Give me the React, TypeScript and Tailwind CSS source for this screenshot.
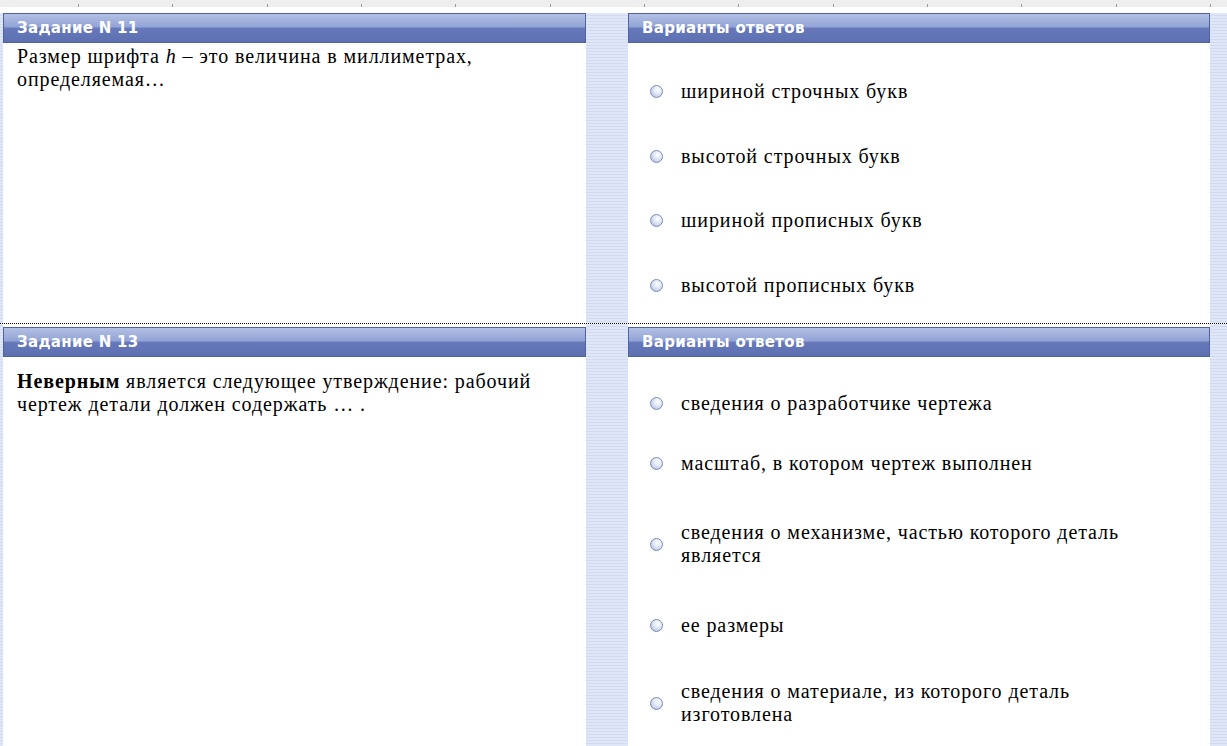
import type { ReactNode } from 'react';

type Task = {
  title: string;
  question: ReactNode;
  questionPad: string;
  answers: Array<{ text: string; h: string }>;
};

const tasks: Task[] = [
  {
    title: 'Задание N 11',
    question: (
      <>
        Размер шрифта <i>h</i> – это величина в миллиметрах, определяемая…
      </>
    ),
    questionPad: 'pt-[2px]',
    answers: [
      { text: 'шириной строчных букв', h: 'h-[65px]' },
      { text: 'высотой строчных букв', h: 'h-[64px]' },
      { text: 'шириной прописных букв', h: 'h-[65px]' },
      { text: 'высотой прописных букв', h: 'h-[65px]' },
    ],
  },
  {
    title: 'Задание N 13',
    question: (
      <>
        <b>Неверным</b> является следующее утверждение: рабочий чертеж детали должен содержать … .
      </>
    ),
    questionPad: 'pt-[13px]',
    answers: [
      { text: 'сведения о разработчике чертежа', h: 'h-[60px]' },
      { text: 'масштаб, в котором чертеж выполнен', h: 'h-[60px]' },
      { text: 'сведения о механизме, частью которого деталь является', h: 'h-[102px]' },
      { text: 'ее размеры', h: 'h-[60px]' },
      { text: 'сведения о материале, из которого деталь изготовлена', h: 'h-[96px]' },
    ],
  },
];

const stripes =
  'bg-[repeating-linear-gradient(to_bottom,#dfe6f7_0px,#dfe6f7_2px,#d2dbf1_2px,#d2dbf1_3px)]';

const serif = "[font-family:'Liberation_Serif','Times_New_Roman',serif] text-[20px] tracking-[0.9px] text-black";

function Header({ children }: { children: ReactNode }) {
  return (
    <div className="h-[30px] shrink-0 flex items-center border border-[#4f63a3] bg-[linear-gradient(to_bottom,#b3c0e4_0%,#93a4d6_45%,#6678ba_52%,#5d70b2_100%)] px-[13px] text-[15px] font-bold text-white [font-family:'DejaVu_Sans',Verdana,sans-serif] tracking-[0.3px]">
      {children}
    </div>
  );
}

function Radio() {
  return (
    <span className="w-[13px] h-[13px] shrink-0 rounded-full border border-[#7a8cb6] bg-[radial-gradient(circle_at_62%_35%,#ffffff_0%,#e6ecf8_35%,#a9b9de_100%)]" />
  );
}

function Ruler() {
  const ticks = Array.from({ length: 13 });
  return (
    <div className="h-[13px] shrink-0">
      <div className="h-[7px] bg-[#eeeeee] flex justify-between items-end pl-[78px] pr-[16px]">
        {ticks.map((_, i) => (
          <span key={i} className="w-px h-[3px] bg-[#9a9a9a]" />
        ))}
      </div>
    </div>
  );
}

function TaskRow({ task, first }: { task: Task; first: boolean }) {
  const panelTop = first ? '' : 'pt-[3px]';
  return (
    <div
      className={`flex ${first ? 'h-[311px] shrink-0 border-b border-dotted border-black' : 'flex-1 min-h-0'}`}
    >
      <div className={`w-[3px] ${stripes}`} />
      <div className={`w-[583px] flex flex-col ${panelTop}`}>
        <Header>{task.title}</Header>
        <div className={`pl-[14px] pr-[26px] ${task.questionPad} leading-[23px] ${serif}`}>
          {task.question}
        </div>
      </div>
      <div className={`w-[42px] ${stripes}`} />
      <div className={`w-[582px] flex flex-col ${panelTop}`}>
        <Header>Варианты ответов</Header>
        <div className="flex flex-col pt-[16px] pl-[22px] pr-[29px]">
          {task.answers.map((a) => (
            <div key={a.text} className={`${a.h} shrink-0 flex items-center gap-[18px]`}>
              <Radio />
              <span className={`leading-[23px] ${serif}`}>{a.text}</span>
            </div>
          ))}
        </div>
      </div>
      <div className={`w-[17px] ${stripes}`} />
    </div>
  );
}

export default function App() {
  return (
    <div className="w-[1227px] h-[746px] bg-white overflow-hidden flex flex-col">
      <Ruler />
      {tasks.map((t, i) => (
        <TaskRow key={t.title} task={t} first={i === 0} />
      ))}
    </div>
  );
}
